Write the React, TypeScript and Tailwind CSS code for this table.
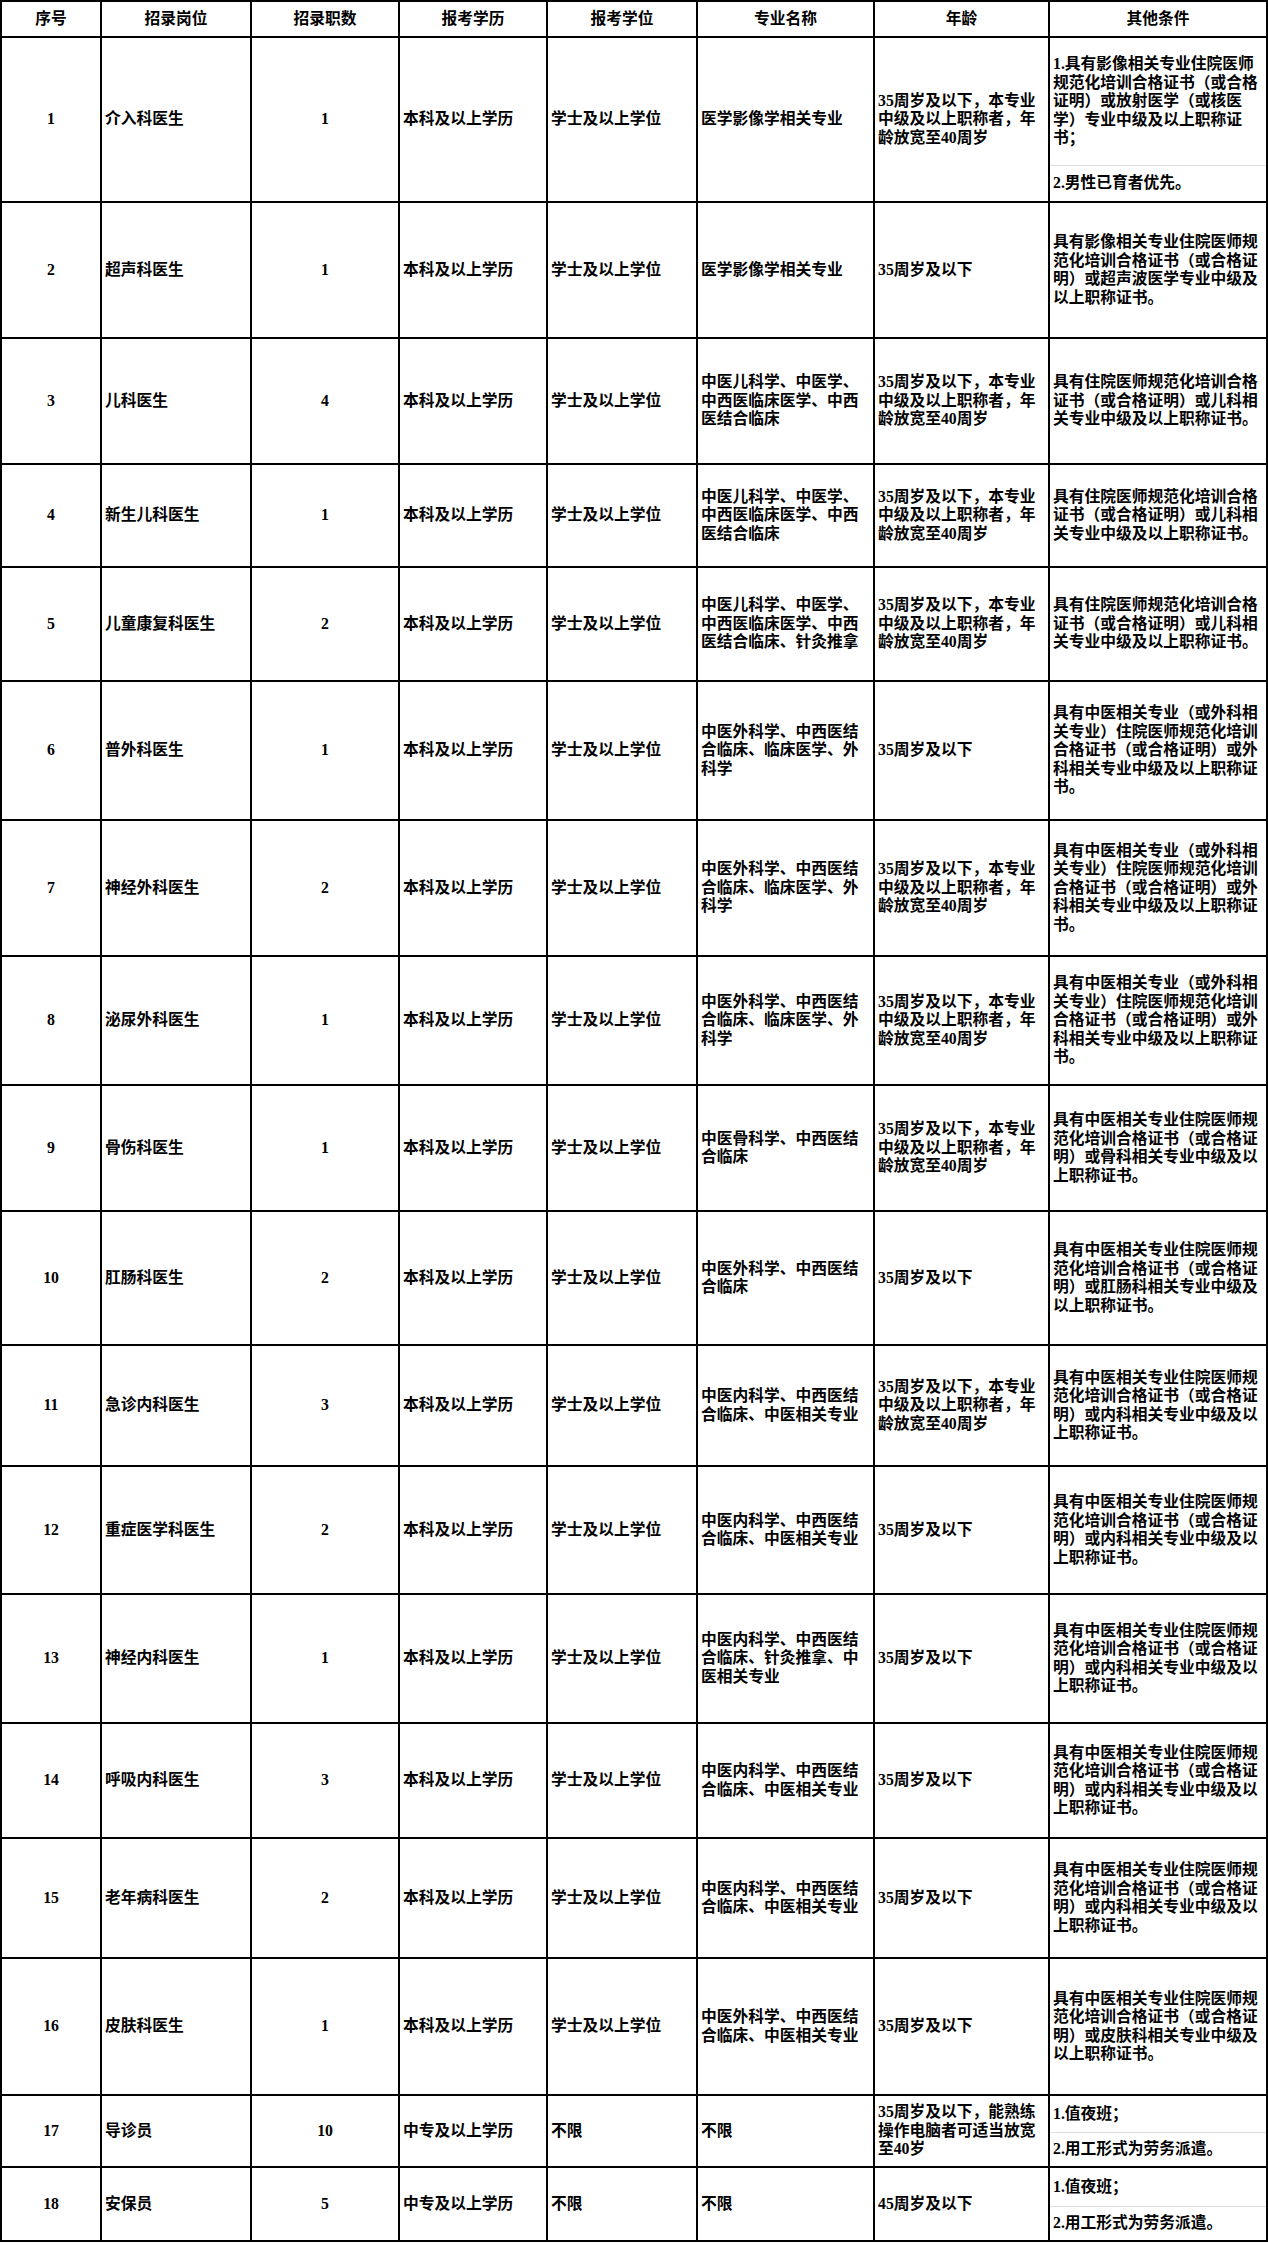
import React from "react";

type Row = {
  no: string;
  post: string;
  count: string;
  edu: string;
  degree: string;
  major: string;
  age: string;
  other: string | { a: string; b: string; bh: string };
};

const AGE_LONG = "35周岁及以下，本专业\n中级及以上职称者，年\n龄放宽至40周岁";
const AGE_SHORT = "35周岁及以下";
const BK = "本科及以上学历";
const XS = "学士及以上学位";
const ER_MAJOR = "中医儿科学、中医学、\n中西医临床医学、中西\n医结合临床";
const ER_OTHER = "具有住院医师规范化培训合格\n证书（或合格证明）或儿科相\n关专业中级及以上职称证书。";
const WK_MAJOR = "中医外科学、中西医结\n合临床、临床医学、外\n科学";
const WK_OTHER = "具有中医相关专业（或外科相\n关专业）住院医师规范化培训\n合格证书（或合格证明）或外\n科相关专业中级及以上职称证\n书。";
const NK_MAJOR = "中医内科学、中西医结\n合临床、中医相关专业";
const NK_OTHER = "具有中医相关专业住院医师规\n范化培训合格证书（或合格证\n明）或内科相关专业中级及以\n上职称证书。";

const rows: Row[] = [
  {
    no: "1", post: "介入科医生", count: "1", edu: BK, degree: XS,
    major: "医学影像学相关专业", age: AGE_LONG,
    other: {
      a: "1.具有影像相关专业住院医师\n规范化培训合格证书（或合格\n证明）或放射医学（或核医\n学）专业中级及以上职称证\n书；",
      b: "2.男性已育者优先。",
      bh: "h-[35px]",
    },
  },
  {
    no: "2", post: "超声科医生", count: "1", edu: BK, degree: XS,
    major: "医学影像学相关专业", age: AGE_SHORT,
    other: "具有影像相关专业住院医师规\n范化培训合格证书（或合格证\n明）或超声波医学专业中级及\n以上职称证书。",
  },
  { no: "3", post: "儿科医生", count: "4", edu: BK, degree: XS, major: ER_MAJOR, age: AGE_LONG, other: ER_OTHER },
  { no: "4", post: "新生儿科医生", count: "1", edu: BK, degree: XS, major: ER_MAJOR, age: AGE_LONG, other: ER_OTHER },
  {
    no: "5", post: "儿童康复科医生", count: "2", edu: BK, degree: XS,
    major: "中医儿科学、中医学、\n中西医临床医学、中西\n医结合临床、针灸推拿", age: AGE_LONG, other: ER_OTHER,
  },
  { no: "6", post: "普外科医生", count: "1", edu: BK, degree: XS, major: WK_MAJOR, age: AGE_SHORT, other: WK_OTHER },
  { no: "7", post: "神经外科医生", count: "2", edu: BK, degree: XS, major: WK_MAJOR, age: AGE_LONG, other: WK_OTHER },
  { no: "8", post: "泌尿外科医生", count: "1", edu: BK, degree: XS, major: WK_MAJOR, age: AGE_LONG, other: WK_OTHER },
  {
    no: "9", post: "骨伤科医生", count: "1", edu: BK, degree: XS,
    major: "中医骨科学、中西医结\n合临床", age: AGE_LONG,
    other: "具有中医相关专业住院医师规\n范化培训合格证书（或合格证\n明）或骨科相关专业中级及以\n上职称证书。",
  },
  {
    no: "10", post: "肛肠科医生", count: "2", edu: BK, degree: XS,
    major: "中医外科学、中西医结\n合临床", age: AGE_SHORT,
    other: "具有中医相关专业住院医师规\n范化培训合格证书（或合格证\n明）或肛肠科相关专业中级及\n以上职称证书。",
  },
  { no: "11", post: "急诊内科医生", count: "3", edu: BK, degree: XS, major: NK_MAJOR, age: AGE_LONG, other: NK_OTHER },
  { no: "12", post: "重症医学科医生", count: "2", edu: BK, degree: XS, major: NK_MAJOR, age: AGE_SHORT, other: NK_OTHER },
  {
    no: "13", post: "神经内科医生", count: "1", edu: BK, degree: XS,
    major: "中医内科学、中西医结\n合临床、针灸推拿、中\n医相关专业", age: AGE_SHORT, other: NK_OTHER,
  },
  { no: "14", post: "呼吸内科医生", count: "3", edu: BK, degree: XS, major: NK_MAJOR, age: AGE_SHORT, other: NK_OTHER },
  { no: "15", post: "老年病科医生", count: "2", edu: BK, degree: XS, major: NK_MAJOR, age: AGE_SHORT, other: NK_OTHER },
  {
    no: "16", post: "皮肤科医生", count: "1", edu: BK, degree: XS,
    major: "中医外科学、中西医结\n合临床、中医相关专业", age: AGE_SHORT,
    other: "具有中医相关专业住院医师规\n范化培训合格证书（或合格证\n明）或皮肤科相关专业中级及\n以上职称证书。",
  },
  {
    no: "17", post: "导诊员", count: "10", edu: "中专及以上学历", degree: "不限",
    major: "不限", age: "35周岁及以下，能熟练\n操作电脑者可适当放宽\n至40岁",
    other: { a: "1.值夜班；", b: "2.用工形式为劳务派遣。", bh: "h-[33px]" },
  },
  {
    no: "18", post: "安保员", count: "5", edu: "中专及以上学历", degree: "不限",
    major: "不限", age: "45周岁及以下",
    other: { a: "1.值夜班；", b: "2.用工形式为劳务派遣。", bh: "h-[33px]" },
  },
];

const headers = ["序号", "招录岗位", "招录职数", "报考学历", "报考学位", "专业名称", "年龄", "其他条件"];

function Center({ children }: { children: React.ReactNode }) {
  return <div className="bg-white flex items-center justify-center text-center">{children}</div>;
}

function Left({ children }: { children: React.ReactNode }) {
  return (
    <div className="bg-white flex items-center pl-[3px] whitespace-pre-line">
      <div>{children}</div>
    </div>
  );
}

function Other({ other }: { other: Row["other"] }) {
  if (typeof other === "string") {
    return <Left>{other}</Left>;
  }
  return (
    <div className="bg-white flex flex-col">
      <div className="flex-1 flex items-center pl-[3px] whitespace-pre-line border-b border-[#dedede]">
        <div>{other.a}</div>
      </div>
      <div className={`${other.bh} flex items-center pl-[3px] whitespace-pre-line`}>
        <div>{other.b}</div>
      </div>
    </div>
  );
}

export default function App() {
  return (
    <div className="bg-white w-[1268px] min-h-[2245px] font-['Liberation_Serif','Noto_Sans_CJK_SC',serif] font-bold text-black text-[15.75px] leading-[18.5px] [text-spacing-trim:space-all]">
      <div className="grid w-[1268px] grid-cols-[98px_148px_146px_146px_148px_175px_173px_216px] grid-rows-[34px_163px_134px_124px_101px_112px_137px_134px_127px_124px_132px_119px_126px_127px_113px_118px_135px_70px_72px] gap-[2px] bg-black p-[2px]">
        {headers.map((h) => (
          <Center key={h}>{h}</Center>
        ))}
        {rows.map((r) => (
          <React.Fragment key={r.no}>
            <Center>{r.no}</Center>
            <Left>{r.post}</Left>
            <Center>{r.count}</Center>
            <Left>{r.edu}</Left>
            <Left>{r.degree}</Left>
            <Left>{r.major}</Left>
            <Left>{r.age}</Left>
            <Other other={r.other} />
          </React.Fragment>
        ))}
      </div>
    </div>
  );
}
